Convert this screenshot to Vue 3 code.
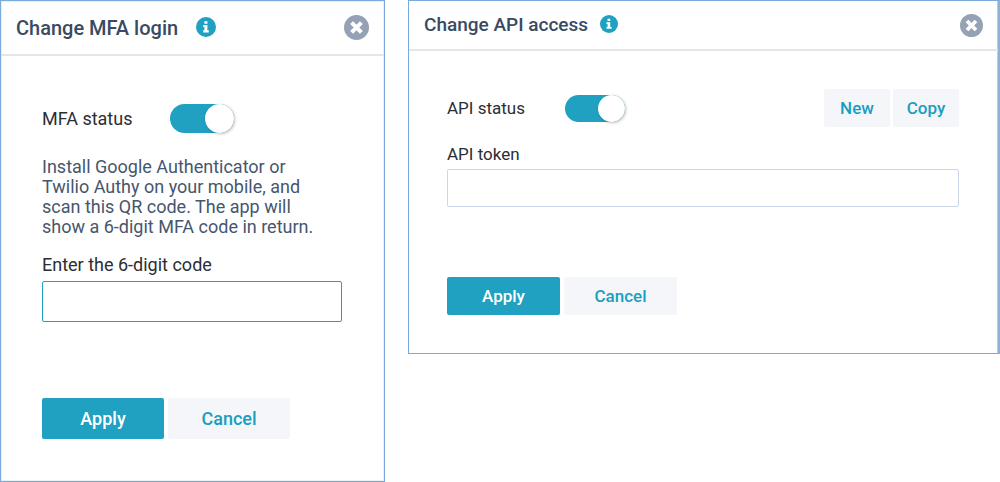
<script setup>
import { ref } from 'vue'

const mfaEnabled = ref(true)
const apiEnabled = ref(true)
const mfaCode = ref('')
const apiToken = ref('')
</script>

<template>
  <main class="dialogs">
    <section class="dialog mfa" aria-labelledby="mfa-title">
      <header class="head">
        <h2 id="mfa-title">Change MFA login</h2>
        <button class="icon info" type="button" aria-label="About MFA login">
          <svg viewBox="0 0 20 20" aria-hidden="true">
            <circle cx="10" cy="10" r="10" />
            <path d="M8.4 4.2h3v2.6h-3zM7.2 8h4.2v5.2h1.4v2.2H7.2v-2.2h1.2V10H7.2z" />
          </svg>
        </button>
        <button class="icon close" type="button" aria-label="Close">
          <svg viewBox="0 0 24 24" aria-hidden="true">
            <circle cx="12" cy="12" r="12" />
            <path d="M7.3 7.3l9.4 9.4M16.7 7.3l-9.4 9.4" />
          </svg>
        </button>
      </header>
      <form class="body" @submit.prevent>
        <div class="status">
          <label for="mfa-status">MFA status</label>
          <input id="mfa-status" v-model="mfaEnabled" class="switch" type="checkbox" role="switch">
        </div>
        <p class="hint">Install Google Authenticator or Twilio Authy on your mobile, and scan this QR code. The app will show a 6-digit MFA code in return.</p>
        <label class="caption" for="mfa-code">Enter the 6-digit code</label>
        <input id="mfa-code" v-model="mfaCode" class="field active" type="text" inputmode="numeric">
        <div class="actions">
          <button class="btn primary" type="submit">Apply</button>
          <button class="btn" type="button">Cancel</button>
        </div>
      </form>
    </section>

    <section class="dialog api" aria-labelledby="api-title">
      <header class="head">
        <h2 id="api-title">Change API access</h2>
        <button class="icon info" type="button" aria-label="About API access">
          <svg viewBox="0 0 20 20" aria-hidden="true">
            <circle cx="10" cy="10" r="10" />
            <path d="M8.4 4.2h3v2.6h-3zM7.2 8h4.2v5.2h1.4v2.2H7.2v-2.2h1.2V10H7.2z" />
          </svg>
        </button>
        <button class="icon close" type="button" aria-label="Close">
          <svg viewBox="0 0 24 24" aria-hidden="true">
            <circle cx="12" cy="12" r="12" />
            <path d="M7.3 7.3l9.4 9.4M16.7 7.3l-9.4 9.4" />
          </svg>
        </button>
      </header>
      <form class="body" @submit.prevent>
        <div class="status">
          <label for="api-status">API status</label>
          <input id="api-status" v-model="apiEnabled" class="switch" type="checkbox" role="switch">
          <div class="tools">
            <button class="btn" type="button">New</button>
            <button class="btn" type="button">Copy</button>
          </div>
        </div>
        <label class="caption" for="api-token">API token</label>
        <input id="api-token" v-model="apiToken" class="field" type="text">
        <div class="actions">
          <button class="btn primary" type="submit">Apply</button>
          <button class="btn" type="button">Cancel</button>
        </div>
      </form>
    </section>
  </main>
</template>

<style>
body {
  background: #fff;
}
</style>

<style scoped>
.dialogs {
  display: grid;
  grid-template-columns: 385fr 592fr;
  gap: 23px;
  align-items: start;
  font-family: Roboto, "Liberation Sans", sans-serif;
  color: #2b2e33;
}
.dialogs *,
.dialogs *::before {
  box-sizing: border-box;
}
.dialog {
  border: 1px solid #78abdc;
  background: #fff;
  box-shadow: inset 0 0 0 1px #eceef2;
}
.head {
  display: flex;
  align-items: center;
  padding: 0 15px;
  border-bottom: 2px solid #e2e6ea;
}
.mfa .head {
  height: 55px;
}
.api .head {
  height: 50px;
}
h2 {
  margin: 0;
  font-weight: 500;
  color: #394a62;
}
.mfa h2 {
  font-size: 20px;
  line-height: 24px;
}
.api h2 {
  font-size: 19px;
  line-height: 24px;
}
.icon {
  display: block;
  flex: none;
  padding: 0;
  border: 0;
  background: none;
}
.icon svg {
  display: block;
  width: 100%;
  height: 100%;
}
.info {
  width: 20px;
  height: 20px;
  margin: 0 0 2px 18px;
}
.info circle {
  fill: #20a1c1;
}
.info path {
  fill: #fff;
}
.close {
  width: 25px;
  height: 25px;
  margin-left: auto;
}
.close circle {
  fill: #95a1b4;
}
.close path {
  fill: none;
  stroke: #fff;
  stroke-width: 4;
}
.api .info {
  width: 18px;
  height: 18px;
  margin-left: 12px;
}
.api .close {
  width: 23px;
  height: 23px;
}
.body {
  display: flex;
  flex-direction: column;
}
.mfa .body {
  padding: 48px 42px 42px 41px;
  font-size: 18px;
  line-height: 20px;
}
.api .body {
  padding: 38px 39px 38px 38px;
  font-size: 17px;
  line-height: 20px;
}
.status {
  display: flex;
  align-items: center;
}
.status label {
  flex: none;
}
.mfa .status label {
  width: 128px;
}
.api .status label {
  width: 118px;
}
.switch {
  appearance: none;
  flex: none;
  width: 64px;
  height: 29px;
  margin: 0;
  border-radius: 15px;
  background: #b5bfcb;
}
.switch::before {
  content: "";
  display: block;
  height: 100%;
  aspect-ratio: 1;
  border-radius: 50%;
  background: #fff;
  box-shadow: 1px 1px 3px rgba(0, 0, 0, 0.25);
}
.switch:checked {
  background: #20a1c1;
}
.switch:checked::before {
  margin-left: auto;
}
.api .switch {
  width: 60px;
  height: 27px;
}
.hint {
  margin: 24px 0 18px;
  padding-right: 20px;
  color: #46566e;
}
.caption {
  margin-bottom: 6px;
}
.api .caption {
  margin: 17px 0 5px;
}
.field {
  width: 100%;
  height: 41px;
  padding: 0 10px;
  border: 1px solid #cbd6e9;
  border-radius: 2px;
  background: #fff;
  font: inherit;
  color: inherit;
}
.field.active {
  border-color: #20a1c1;
}
.api .field {
  height: 38px;
}
.tools,
.actions {
  display: flex;
  gap: 4px;
}
.tools {
  gap: 3px;
  margin-left: auto;
}
.actions {
  margin-top: 76px;
}
.api .actions {
  margin-top: 70px;
}
.btn {
  width: 122px;
  height: 41px;
  padding: 0;
  border: 0;
  border-radius: 2px;
  background: #f4f6fa;
  color: #189fc0;
  font: inherit;
  font-weight: 500;
}
.btn.primary {
  background: #20a1c1;
  color: #fff;
}
.api .btn {
  width: 113px;
  height: 38px;
}
.api .tools .btn {
  width: 66px;
}
.dialog.api {
  border-right: 2px solid #8fb1d8;
  box-shadow: inset -1px 0 0 #c9cacd;
}
</style>
